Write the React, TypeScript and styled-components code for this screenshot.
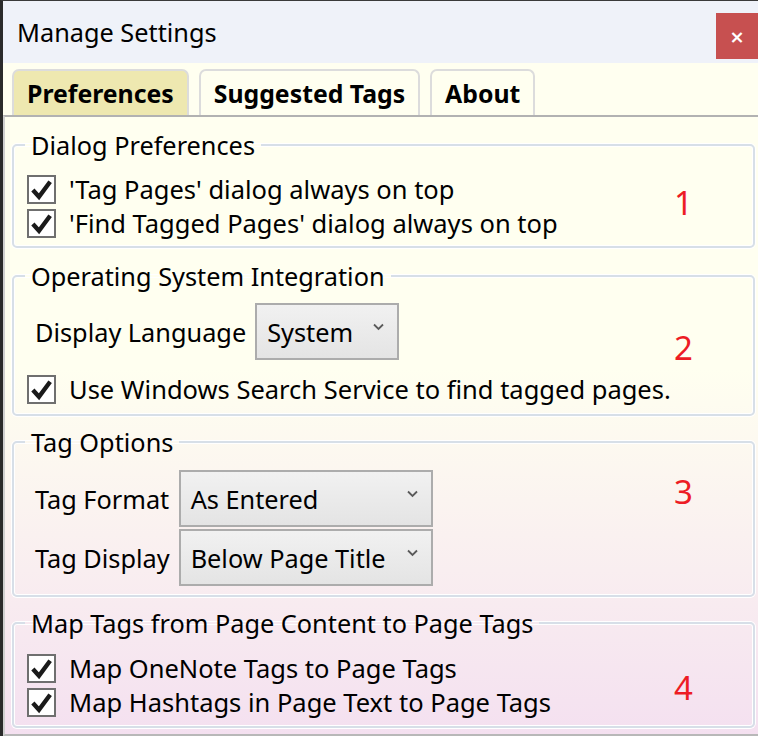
import React from "react";
import styled, { createGlobalStyle } from "styled-components";

const FONT = `"Noto Sans", "Open Sans", "Liberation Sans", sans-serif`;

const GlobalStyle = createGlobalStyle`
  html, body { margin: 0; padding: 0; background: #fffff0; }
  * { box-sizing: border-box; }
  body { font-family: ${FONT}; color: #000; }
`;

const Window = styled.div`
  width: 758px;
  height: 736px;
  overflow: hidden;
  border-left: 3px solid #2b2b2b;
  border-top: 1px solid #3a3a3a;
  display: flex;
  flex-direction: column;
  background: linear-gradient(to bottom, #fffff0 0%, #fffff0 50%, #f4e0f0 100%);
`;

const TitleBar = styled.div`
  height: 62px;
  flex: none;
  display: flex;
  align-items: flex-start;
  justify-content: space-between;
  background: #eff2f9;
`;

const Title = styled.div`
  font-size: 25.3px;
  line-height: 62px;
  padding-left: 14px;
`;

const CloseButton = styled.div`
  margin-top: 12px;
  width: 42px;
  height: 46px;
  background: #c75050;
  color: #fff;
  font-family: "DejaVu Sans", sans-serif;
  font-weight: bold;
  font-size: 18px;
  display: flex;
  align-items: center;
  justify-content: center;
`;

const TabStrip = styled.div`
  flex: none;
  display: flex;
  gap: 10px;
  padding: 6px 0 0 9px;
`;

const Tab = styled.div<{ $active?: boolean }>`
  height: 46px;
  padding: 0 13px 0 13px;
  display: flex;
  align-items: center;
  font-weight: 700;
  font-size: 24.8px;
  border: 2px solid #dcdcdc;
  border-bottom: none;
  border-radius: 7px 7px 0 0;
  background: ${(p) => (p.$active ? "#eee8b0" : "transparent")};
`;

const Panel = styled.div`
  flex: 1;
  border-top: 2px solid #b2b2b2;
  border-left: 2px solid #d0d0d0;
  border-bottom: 2px solid #b8b8b8;
  padding: 12px 3px 0 7px;
  display: flex;
  flex-direction: column;
  gap: 10px;
`;

const Group = styled.fieldset<{ $pb: number }>`
  position: relative;
  margin: 0;
  min-width: 0;
  border: 2px solid #d7dfe8;
  border-radius: 5px;
  padding: 0 11px ${(p) => p.$pb}px 11px;
  box-shadow: 0 0 0 1px #ffffff, inset 0 0 0 1px #ffffff;
`;

const Legend = styled.legend`
  font-size: 25.3px;
  line-height: 32px;
  padding: 0 6px;
`;

const Rows = styled.div<{ $pt: number; $gap?: number }>`
  padding-top: ${(p) => p.$pt}px;
  display: flex;
  flex-direction: column;
  gap: ${(p) => p.$gap ?? 0}px;
`;

const CheckRow = styled.label`
  height: 34px;
  display: flex;
  align-items: center;
  gap: 13px;
  padding-left: 2px;
  font-size: 25.5px;
`;

const Box = styled.span`
  width: 29px;
  height: 29px;
  flex: none;
  border: 2px solid #6f6f6f;
  background: #fff;
  display: flex;
  align-items: center;
  justify-content: center;
`;

const FieldGrid = styled.div`
  display: grid;
  grid-template-columns: auto auto;
  justify-content: start;
  row-gap: 2px;
  column-gap: 9px;
  align-items: center;
`;

const FieldLabel = styled.div`
  font-size: 25.3px;
  padding-left: 10px;
`;

const Select = styled.div<{ $w: number }>`
  width: ${(p) => p.$w}px;
  height: 57px;
  border: 2px solid #acacac;
  background: linear-gradient(to bottom, #f1f1f1, #e4e4e4);
  display: flex;
  align-items: center;
  justify-content: space-between;
  padding: 0 13px 0 10px;
  font-size: 25.3px;
`;

const Chevron = styled.svg`
  width: 11px;
  height: 8px;
  margin-top: -10px;
  flex: none;
`;

const Marker = styled.div<{ $top: number }>`
  position: absolute;
  left: 660px;
  top: ${(p) => p.$top}px;
  font-size: 33px;
  line-height: 40px;
  color: #ed1c24;
`;

const Check = ({ label }: { label: string }) => (
  <CheckRow>
    <Box>
      <svg width="23" height="23" viewBox="0 0 20 20">
        <path d="M2.5 10.5 L7.8 16.3 L17.5 3.2" fill="none" stroke="#1a1a1a" strokeWidth="3.8" strokeLinejoin="miter" />
      </svg>
    </Box>
    {label}
  </CheckRow>
);

const Dropdown = ({ value, width }: { value: string; width: number }) => (
  <Select $w={width}>
    {value}
    <Chevron viewBox="0 0 11 8">
      <path d="M1 1.5 L5.5 6 L10 1.5" fill="none" stroke="#5a5a5a" strokeWidth="1.8" />
    </Chevron>
  </Select>
);

export default function App() {
  return (
    <>
      <GlobalStyle />
      <Window>
        <TitleBar>
          <Title>Manage Settings</Title>
          <CloseButton>×</CloseButton>
        </TitleBar>
        <TabStrip>
          <Tab $active>Preferences</Tab>
          <Tab>Suggested Tags</Tab>
          <Tab>About</Tab>
        </TabStrip>
        <Panel>
          <Group $pb={6} style={{ marginBottom: 2 }}>
            <Legend>Dialog Preferences</Legend>
            <Rows $pt={11}>
              <Check label="'Tag Pages' dialog always on top" />
              <Check label="'Find Tagged Pages' dialog always on top" />
            </Rows>
            <Marker $top={22}>1</Marker>
          </Group>
          <Group $pb={8}>
            <Legend>Operating System Integration</Legend>
            <Rows $pt={11} $gap={12}>
              <FieldGrid>
                <FieldLabel>Display Language</FieldLabel>
                <Dropdown value="System" width={144} />
              </FieldGrid>
              <Check label="Use Windows Search Service to find tagged pages." />
            </Rows>
            <Marker $top={36}>2</Marker>
          </Group>
          <Group $pb={9}>
            <Legend>Tag Options</Legend>
            <Rows $pt={12}>
              <FieldGrid>
                <FieldLabel>Tag Format</FieldLabel>
                <Dropdown value="As Entered" width={254} />
                <FieldLabel>Tag Display</FieldLabel>
                <Dropdown value="Below Page Title" width={254} />
              </FieldGrid>
            </Rows>
            <Marker $top={14}>3</Marker>
          </Group>
          <Group $pb={7}>
            <Legend>Map Tags from Page Content to Page Tags</Legend>
            <Rows $pt={12}>
              <Check label="Map OneNote Tags to Page Tags" />
              <Check label="Map Hashtags in Page Text to Page Tags" />
            </Rows>
            <Marker $top={29}>4</Marker>
          </Group>
        </Panel>
      </Window>
    </>
  );
}
